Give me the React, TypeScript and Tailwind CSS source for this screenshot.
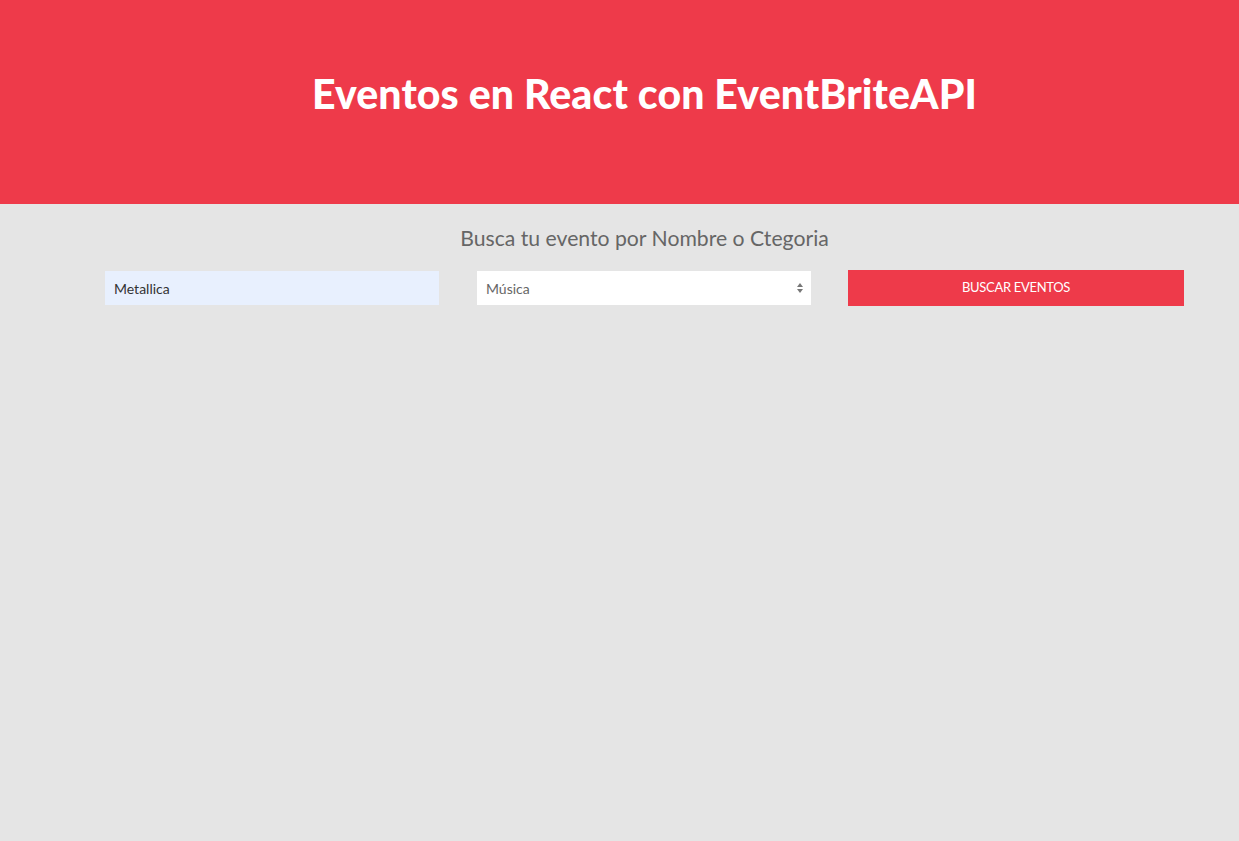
import React, { useState } from 'react';

const categorias = ['Música', 'Negocios', 'Comida y Bebida', 'Deportes'];

const App: React.FC = () => {
  const [nombre, setNombre] = useState('Metallica');
  const [categoria, setCategoria] = useState('Música');

  return (
    <div className="min-h-[841px] bg-[#e5e5e5] font-['Lato','Open_Sans',sans-serif]">
      <header className="h-[204px] bg-[#ee3a4a] flex justify-center pt-[72px] pl-[50px]">
        <h1 className="text-white text-[41px] leading-[44px] font-black tracking-[0.1px]">
          Eventos en React con EventBriteAPI
        </h1>
      </header>

      <section className="pt-[22px] pl-[105px]">
        <h2 className="text-center text-[#666666] text-[21.2px] leading-[24px] w-[1079px]">
          Busca tu evento por Nombre o Ctegoria
        </h2>

        <form className="mt-[20px] flex items-center" onSubmit={(e) => e.preventDefault()}>
          <input
            value={nombre}
            onChange={(e) => setNombre(e.target.value)}
            className="w-[334px] h-[34px] bg-[#e8f0fe] px-[9px] text-[14px] text-[#333] outline-none"
          />
          <div className="relative w-[334px] h-[34px] ml-[38px] bg-white">
            <select
              value={categoria}
              onChange={(e) => setCategoria(e.target.value)}
              className="appearance-none w-full h-full bg-transparent px-[9px] text-[14px] text-[#666] outline-none"
            >
              {categorias.map((c) => (
                <option key={c}>{c}</option>
              ))}
            </select>
            <svg
              className="absolute right-[8px] top-[11px] pointer-events-none"
              width="6"
              height="12"
              viewBox="0 0 6 12"
            >
              <path d="M0 5 3 1 6 5Z" fill="#777" />
              <path d="M0 7 3 11 6 7Z" fill="#777" />
            </svg>
          </div>
          <button
            type="submit"
            className="w-[336px] h-[36px] ml-[37px] bg-[#ee3a4a] text-white text-[13px] uppercase tracking-[-0.3px]"
          >
            Buscar eventos
          </button>
        </form>
      </section>
    </div>
  );
};

export default App;
